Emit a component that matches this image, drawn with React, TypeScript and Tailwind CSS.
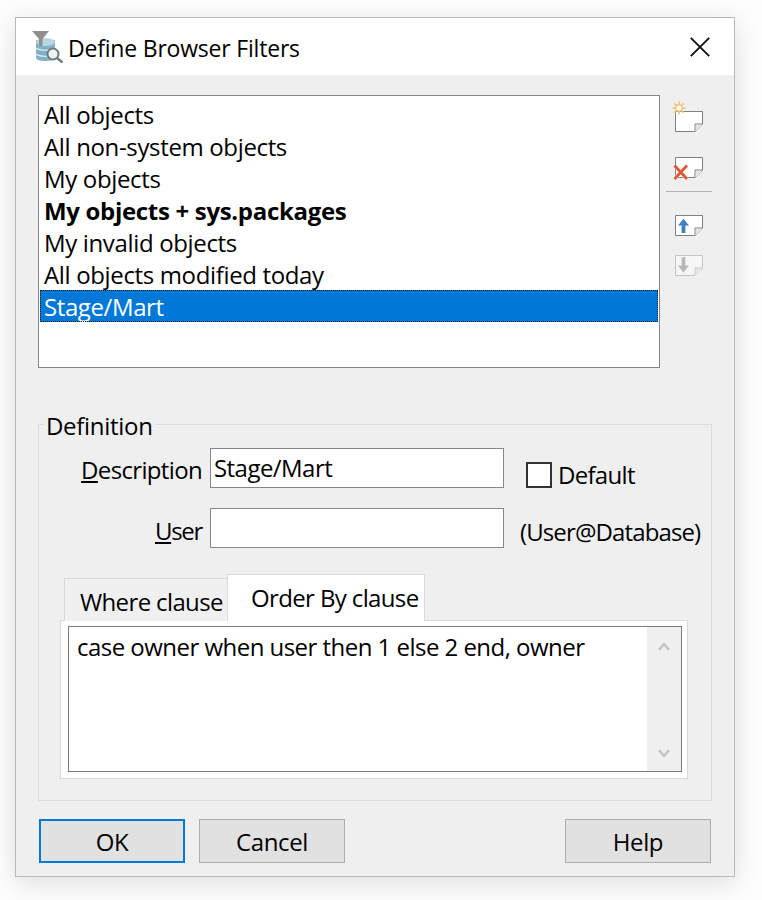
import React from "react";

const font = "font-['Open_Sans','Noto_Sans',sans-serif]";

const items = [
  { t: "All objects" },
  { t: "All non-system objects" },
  { t: "My objects" },
  { t: "My objects + sys.packages", b: true },
  { t: "My invalid objects" },
  { t: "All objects modified today" },
];

function Sheet({ y, dim }: { y: number; dim?: boolean }) {
  const s = dim ? "#c4c4c4" : "#808080";
  return (
    <>
      <path d={`M9.5 ${y}H36.5V${y + 12.5}L29 ${y + 20}H9.5Z`} fill={dim ? "#f6f6f6" : "#fff"} stroke={s} />
      <path d={`M29 ${y + 20}V${y + 12.5}H36.5`} fill={dim ? "#f6f6f6" : "#fff"} stroke={s} />
      <path d={`M30 ${y + 18.5}L35.5 ${y + 13.5}H30Z`} fill="#e4e4e4" />
    </>
  );
}

function Toolbar() {
  return (
    <div className="w-[46px] ml-[6px] shrink-0 flex flex-col">
      <svg width="46" height="36" viewBox="0 0 46 36" className="block mt-[5px]">
        <Sheet y={11.5} />
        <g stroke="#f0c272" strokeWidth="1.6">
          <path d="M13 1.5V14.5M6.5 8H19.5M8.4 3.4L17.6 12.6M17.6 3.4L8.4 12.6" />
        </g>
        <circle cx="13" cy="8" r="3.2" fill="#fff" stroke="#f0c272" strokeWidth="1.3" />
      </svg>
      <svg width="46" height="36" viewBox="0 0 46 36" className="block mt-[14px]">
        <Sheet y={7.5} />
        <path d="M8.5 15.5L21 29M21 15.5L8.5 29" stroke="#fff" strokeWidth="4" opacity="0.7" />
        <path d="M8.5 15.5L21 29M21 15.5L8.5 29" stroke="#df5536" strokeWidth="2.8" />
      </svg>
      <div className="w-[46px] h-px bg-[#b4b4b4] mt-[5px]" />
      <svg width="46" height="30" viewBox="0 0 46 30" className="block mt-[18px]">
        <Sheet y={5.5} />
        <path d="M17.5 8.7L12 15.5H15.6V23H19.4V15.5H23Z" fill="#3f80c4" />
      </svg>
      <svg width="46" height="30" viewBox="0 0 46 30" className="block mt-[10px]">
        <Sheet y={5.5} dim />
        <path d="M15.6 7.3V15.5H12L17.5 22.7L23 15.5H19.4V7.3Z" fill="#b8b8b8" />
      </svg>
    </div>
  );
}

export default function App() {
  return (
    <div className={`w-[762px] h-[900px] bg-[#fdfdfd] pt-[17px] pl-[15px] text-[24px] leading-[32px] text-black ${font}`}>
      <div className="w-[720px] h-[860px] bg-[#efefef] border border-[#b9b9b9] shadow-[0_6px_24px_rgba(0,0,0,0.13)] flex flex-col">
        <div className="h-[57px] bg-white flex items-center shrink-0 pl-[16px] pr-[24px]">
          <svg width="32" height="32" viewBox="0 0 32 32" className="block shrink-0">
            <path d="M4 9V26C4 29 8 30 13 30S23 29 23 26V9Z" fill="#7fb2c6" />
            <ellipse cx="13.5" cy="11" rx="9.5" ry="4" fill="#b9d6e0" />
            <path d="M4 17C7 20 20 20 23 17M4 23C7 26 20 26 23 23" stroke="#e4f0f4" strokeWidth="1.2" fill="none" />
            <path d="M0 0H17L10.5 8V15H7V8Z" fill="#8f8f8f" />
            <circle cx="21" cy="23" r="5.5" fill="#eef4f6" stroke="#6f7b80" strokeWidth="2" />
            <path d="M25 27L30.5 31.5" stroke="#6f7b80" strokeWidth="2.6" />
          </svg>
          <span className="ml-[4px] pt-[2px] text-[23px] tracking-[-0.2px] flex-1">Define Browser Filters</span>
          <svg width="20" height="20" viewBox="0 0 20 20" className="block shrink-0">
            <path d="M0.8 0.8L19.2 19.2M19.2 0.8L0.8 19.2" stroke="#111" strokeWidth="1.9" />
          </svg>
        </div>

        <div className="flex-1 pl-[22px] pr-[22px] flex flex-col">
          <div className="flex mt-[20px]">
            <div className="w-[622px] h-[273px] shrink-0 bg-white border border-[#828790] pt-[3px] tracking-[-0.35px]">
              {items.map((i) => (
                <div key={i.t} className={`h-[32px] pl-[5px] ${i.b ? "font-bold tracking-[-0.32px]" : ""}`}>{i.t}</div>
              ))}
              <div className="h-[32px] -mt-px pt-px mx-px pl-[4px] leading-[31px] bg-[#0078d7] text-white outline-1 -outline-offset-1 outline-dotted outline-[#222] tracking-[-0.4px]">Stage/Mart</div>
            </div>
            <Toolbar />
          </div>

          <fieldset className="w-[674px] min-w-0 h-[392px] mt-[41px] border border-[#dcdcdc] rounded-none px-[21px]">
            <legend className="-ml-[16px] px-[2px] pt-[4px] tracking-[-0.3px] leading-[26px]">Definition</legend>
            <div className="flex h-[40px] mt-[9px]">
              <label className="w-[142px] shrink-0 text-right leading-[44px] whitespace-nowrap tracking-[-0.66px]"><span className="underline underline-offset-2">D</span>escription</label>
              <div className="ml-[8px] w-[294px] shrink-0 h-[40px] bg-white border border-[#828790] px-[3px] leading-[37px] tracking-[-0.55px]">Stage/Mart</div>
              <div className="ml-[22px] mt-[14px] w-[26px] h-[26px] shrink-0 bg-white border-2 border-[#333]" />
              <span className="ml-[6px] mt-[11px] leading-[32px] tracking-[-0.7px]">Default</span>
            </div>
            <div className="flex h-[40px] mt-[20px]">
              <label className="w-[142px] shrink-0 text-right leading-[46px] tracking-[-1.3px]"><span className="underline underline-offset-2">U</span>ser</label>
              <div className="ml-[8px] w-[294px] shrink-0 h-[40px] bg-white border border-[#828790]" />
              <span className="ml-[16px] leading-[48px] whitespace-nowrap tracking-[-0.88px]">(User@Database)</span>
            </div>

            <div className="mt-[26px] flex items-end h-[47px] relative z-10 -mb-px pl-[4px] tracking-[-0.63px]">
              <div className="w-[164px] h-[43px] bg-[#f0f0f0] border border-b-0 border-[#d9d9d9] pl-[15px] pt-[7px] whitespace-nowrap">Where clause</div>
              <div className="w-[198px] h-[47px] bg-white border border-b-0 border-[#d9d9d9] pl-[23px] pt-[7px] -ml-px whitespace-nowrap">Order By clause</div>
            </div>
            <div className="w-[628px] h-[159px] bg-white border border-[#d9d9d9] pl-[7px] pt-[5px]">
              <div className="w-[614px] h-[146px] border border-[#7a7a7a] flex tracking-[-0.53px]">
                <div className="flex-1 pl-[8px] pt-[4px]">case owner when user then 1 else 2 end, owner</div>
                <div className="w-[34px] bg-[#f0f0f0] flex flex-col justify-between items-center pt-[15px] pb-[13px]">
                  <svg width="12" height="9" viewBox="0 0 12 9" className="block"><path d="M1 8L6 2L11 8" stroke="#c4c4c4" strokeWidth="2.4" fill="none" /></svg>
                  <svg width="12" height="9" viewBox="0 0 12 9" className="block"><path d="M1 1L6 7L11 1" stroke="#c4c4c4" strokeWidth="2.4" fill="none" /></svg>
                </div>
              </div>
            </div>
          </fieldset>

          <div className="flex mt-[18px] pl-px tracking-[-0.4px]">
            <button className="w-[146px] h-[44px] pt-[2px] bg-[#e1e1e1] border-2 border-[#0078d7]">OK</button>
            <button className="ml-[14px] w-[146px] h-[44px] pt-[2px] bg-[#e1e1e1] border border-[#adadad]">Cancel</button>
            <button className="ml-[220px] w-[146px] h-[44px] pt-[2px] bg-[#e1e1e1] border border-[#adadad]">Help</button>
          </div>
        </div>
      </div>
    </div>
  );
}
